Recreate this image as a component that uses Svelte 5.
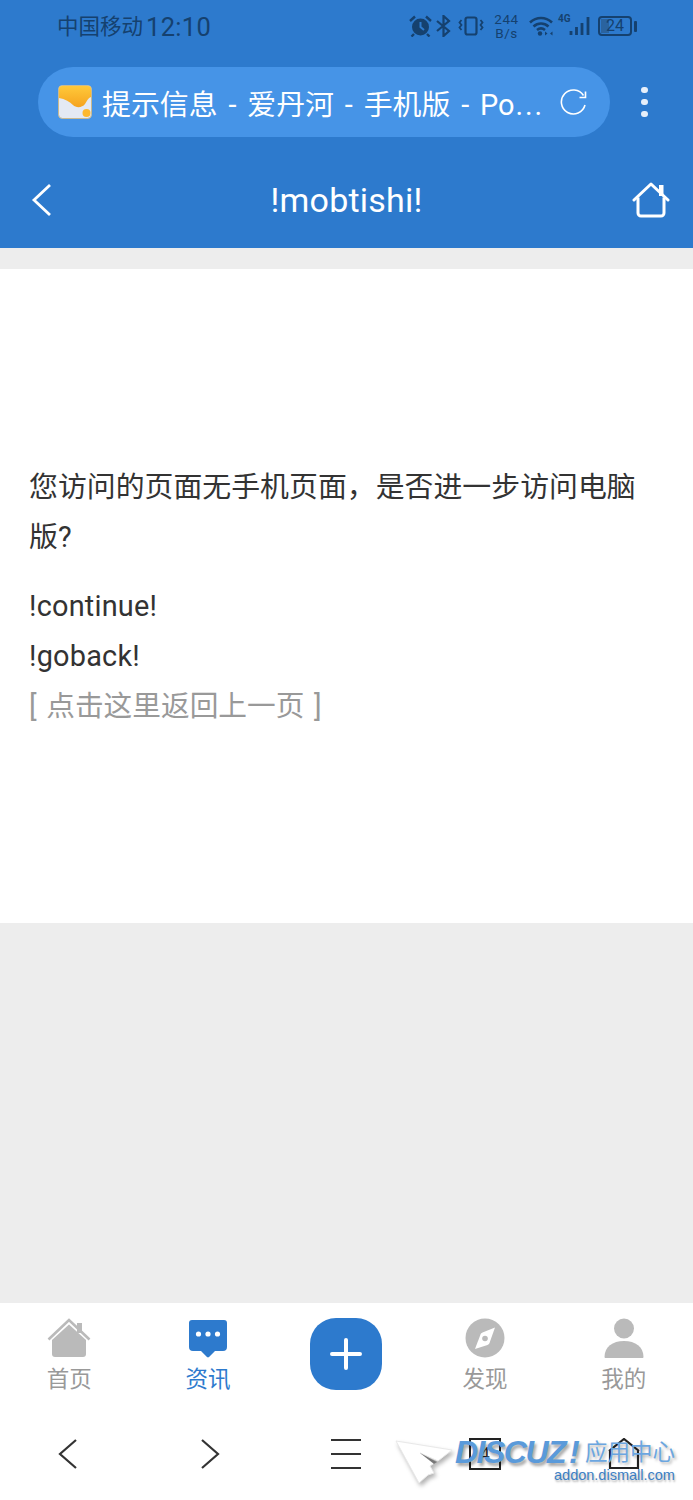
<script>
  const tabs = [
    { label: '首页', kind: 'home' },
    { label: '资讯', kind: 'chat', active: true },
    { label: '', kind: 'plus' },
    { label: '发现', kind: 'compass' },
    { label: '我的', kind: 'user' }
  ];
</script>

<div class="page">
  <header class="head">
    <div class="status">
      <div class="carrier"><span class="cn">中国移动</span><span class="time">12:10</span></div>
      <div class="sys">
        <svg width="23" height="22" viewBox="0 0 23 22" class="alarm"><circle cx="11.500" cy="12" r="8.500" fill="#15416f"/><path d="M11.500 7v5l3.500 3" stroke="#2d7acd" stroke-width="2" fill="none"/><path d="M1 6l5-4.500M22 6l-5-4.500M5 19l-2.500 2.500M18 19l2.500 2.500" stroke="#15416f" stroke-width="2.400"/></svg>
        <svg width="15" height="22" viewBox="0 0 15 22" class="bt"><path d="M1 6l12 10-5.500 5V1L13 6 1 16" stroke="#15416f" stroke-width="2.200" fill="none"/></svg>
        <svg width="26" height="20" viewBox="0 0 26 20" class="vib"><rect x="7.500" y="1.500" width="11" height="17" rx="2" stroke="#15416f" stroke-width="2.200" fill="none"/><path d="M3.500 4l-2 2.500 2 2.500-2 2.500 2 2.500M22.500 4l2 2.500-2 2.500 2 2.500-2 2.500" stroke="#15416f" stroke-width="1.800" fill="none"/></svg>
        <div class="speed"><span>244</span><span>B/s</span></div>
        <svg width="24" height="20" viewBox="0 0 24 20" class="wifi"><path d="M1 6.500c6.500-6 15.500-6 22 0M4.500 10.500c4.500-4 10.500-4 15 0M8 14c2.500-2 5.500-2 8 0" stroke="#15416f" stroke-width="2.600" fill="none"/><circle cx="11" cy="17.500" r="2.200" fill="#15416f"/><path d="M16 15.500l2.500 2-2.500 2zM23.500 15.500l-2.500 2 2.500 2z" fill="#15416f"/></svg>
        <div class="signal">
          <span class="g4">4G</span>
          <svg width="22" height="20" viewBox="0 0 22 20"><path d="M2 15v4M7.500 11v8M13 7v12M19 1v18" stroke="#15416f" stroke-width="2.800"/></svg>
        </div>
        <div class="batt"><i class="fill"></i><b>24</b></div><i class="cap"></i>
      </div>
    </div>

    <div class="urlrow">
      <div class="pill">
        <svg class="fav" width="34" height="34" viewBox="0 0 34 34">
          <defs><linearGradient id="favg" x1="0" y1="0" x2="0" y2="1"><stop offset="0" stop-color="#ffc93a"/><stop offset="1" stop-color="#f5a31f"/></linearGradient></defs>
          <rect x=".5" y=".5" width="33" height="33" rx="4" fill="#e4e9f3" stroke="#c9b98f"/>
          <path d="M1 4a3 3 0 0 1 3-3h26a3 3 0 0 1 3 3v8c-3 1-4 4-6 7-3 4-9 4-12 1-3-3-8-6-14-7z" fill="url(#favg)"/>
          <circle cx="28.500" cy="28" r="4" fill="#fcb82e"/>
        </svg>
        <span class="title">提示信息 - 爱丹河 - 手机版 - Po<span class="ell">...</span></span>
        <svg class="reload" width="28" height="28" viewBox="0 0 28 28"><path d="M23.500 8.500A12 12 0 1 0 25 18" stroke="#fff" stroke-width="1.600" fill="none"/><path d="M25.500 4.500v6h-6" stroke="#fff" stroke-width="1.600" fill="none"/></svg>
      </div>
      <div class="dots"><i></i><i></i><i></i></div>
    </div>

    <div class="nav">
      <svg width="24" height="36" viewBox="0 0 24 36"><path d="M20 3L4 18l16 15" stroke="#fff" stroke-width="2.800" fill="none"/></svg>
      <span class="navtitle">!mobtishi!</span>
      <svg class="navhome" width="38" height="36" viewBox="0 0 38 36">
        <path d="M2 18L19 2l17 16" stroke="#fff" stroke-width="3" fill="none" stroke-linejoin="round" stroke-linecap="round"/>
        <path d="M27 3h4.500v11H27z" fill="#fff"/>
        <path d="M6 15.500V31a3 3 0 0 0 3 3h20a3 3 0 0 0 3-3V15.500" stroke="#fff" stroke-width="3" fill="none"/>
      </svg>
    </div>
  </header>

  <main class="content">
    <div class="card">
      <p class="msg">您访问的页面无手机页面，是否进一步访问电脑版?</p>
      <p class="link first">!continue!</p>
      <p class="link">!goback!</p>
      <p class="link back">[ 点击这里返回上一页 ]</p>
    </div>
  </main>

  <nav class="tabs">
    {#each tabs as t}
      <div class="tab" class:active={t.active}>
        {#if t.kind === 'home'}
          <svg width="44" height="40" viewBox="0 0 44 40"><path d="M1.500 21.500L22 2l20.500 19.500" stroke="#bababa" stroke-width="2.600" fill="none"/><path d="M30 5h5v10h-5z" fill="#bababa"/><path d="M5 22L22 6.500 39 22v14a3 3 0 0 1-3 3H8a3 3 0 0 1-3-3z" fill="#bababa"/></svg>
        {:else if t.kind === 'chat'}
          <svg width="40" height="40" viewBox="0 0 40 40"><path d="M4 2h32a3 3 0 0 1 3 3v24a4 4 0 0 1-4 4h-8l-6 6a1.500 1.500 0 0 1-2 0l-6-6H5a4 4 0 0 1-4-4V5a3 3 0 0 1 3-3z" fill="#2d7acd"/><circle cx="10.500" cy="16" r="2.600" fill="#fff"/><circle cx="20" cy="16" r="2.600" fill="#fff"/><circle cx="29.500" cy="16" r="2.600" fill="#fff"/></svg>
        {:else if t.kind === 'plus'}
          <div class="plus"><svg width="34" height="34" viewBox="0 0 34 34"><path d="M17 3v28M3 17h28" stroke="#fff" stroke-width="4" stroke-linecap="round"/></svg></div>
        {:else if t.kind === 'compass'}
          <svg width="40" height="40" viewBox="0 0 40 40"><circle cx="20" cy="20" r="19.500" fill="#bababa"/><path d="M30 9.500L24.500 25c-.5 1-1 1.500-2 2L10 31l5.500-14.500c.4-1 1-1.500 2-2z" fill="#fff"/><circle cx="20" cy="20.500" r="2.800" fill="#bababa"/></svg>
        {:else}
          <svg width="40" height="40" viewBox="0 0 40 40"><circle cx="20" cy="10.500" r="10" fill="#bababa"/><path d="M0.500 39c0-10 8-16 19.500-16s19.500 6 19.500 16c0 .5-.5 1-1 1H1.500c-.5 0-1-.5-1-1z" fill="#bababa"/></svg>
        {/if}
        {#if t.label}<span class="tablabel">{t.label}</span>{/if}
      </div>
    {/each}
  </nav>

  <footer class="browser">
    <svg class="prev" width="24" height="32" viewBox="0 0 24 32"><path d="M20 2L4 16l16 14" stroke="#333" stroke-width="2.200" fill="none" /></svg>
    <svg class="next" width="24" height="32" viewBox="0 0 24 32"><path d="M4 2l16 14L4 30" stroke="#333" stroke-width="2.200" fill="none" /></svg>
    <svg width="32" height="32" viewBox="0 0 32 32"><path d="M1 2h30M1 16h30M1 30h30" stroke="#333" stroke-width="2.200"/></svg>
    <div class="count">4</div>
    <svg width="32" height="32" viewBox="0 0 32 32"><path d="M1 13L16 1l15 12" stroke="#222" stroke-width="2.200" fill="none"/><path d="M2 13v17h28V13" stroke="#222" stroke-width="2.200" fill="none"/></svg>
  </footer>

  <div class="mark">
    <svg class="plane" width="58" height="44" viewBox="0 0 58 44"><path d="M1 1l56 9-14 11-18-8 16 9-6 4 4 7-6 2-9 8z" fill="#fff" stroke="#e8e8e8"/><path d="M25 13l17 9-3 2z" fill="#777"/></svg>
    <span class="dz">DISCUZ<em>!</em></span>
    <span class="app">应用中心</span>
    <span class="addr">addon.dismall.com</span>
  </div>
</div>

<style>
  :global(body) { margin: 0; background: #ededed; }
  .page {
    position: relative;
    width: 693px;
    height: 1500px;
    display: flex;
    flex-direction: column;
    overflow: hidden;
    font-family: Roboto, "Noto Sans CJK SC", sans-serif;
    background: #ededed;
  }
  .head { height: 248px; background: #2d7acd; flex: none; display: flex; flex-direction: column; }
  .status {
    height: 52px;
    padding: 0 56px 0 57px;
    display: flex;
    justify-content: space-between;
    align-items: center;
    color: #15416f;
    box-sizing: border-box;
  }
  .carrier { display: flex; align-items: center; gap: 3px; }
  .cn { font-size: 21.500px; line-height: 26px; margin-top: 1px; }
  .time { font-size: 25.500px; line-height: 26px; margin-top: 2px; letter-spacing: .3px; }
  .sys { display: flex; align-items: center; }
  .alarm { margin-right: 4px; flex: none; }
  .bt { margin-right: 7px; flex: none; }
  .vib { margin-right: 10px; flex: none; }
  .speed { display: flex; flex-direction: column; align-items: center; font-size: 13.500px; line-height: 14px; width: 25px; margin-right: 10px; letter-spacing: .6px; }
  .wifi { margin-right: 5px; flex: none; }
  .signal { position: relative; width: 33px; height: 20px; margin-right: 7px; flex: none; }
  .signal svg { position: absolute; right: 0; top: 0; }
  .g4 { position: absolute; left: 0; top: -3px; font-size: 10px; line-height: 12px; font-weight: 700; }
  .batt {
    position: relative;
    border: 2px solid #15416f;
    border-radius: 4px;
    display: flex;
    align-items: center;
    justify-content: center;
    box-sizing: content-box;
    width: 30px;
    height: 16px;
  }
  .batt .fill { position: absolute; left: 1px; top: 1px; bottom: 1px; width: 8px; background: #2a639f; }
  .batt b { position: relative; font-weight: 400; font-size: 16px; line-height: 16px; }
  .cap { width: 3px; height: 11px; background: #15416f; margin-left: 2px; border-radius: 1px; }

  .urlrow { display: flex; align-items: center; height: 70px; margin-top: 15px; padding-left: 38px; }
  .pill {
    width: 572px;
    height: 70px;
    border-radius: 35px;
    background: #4694e7;
    display: flex;
    align-items: center;
    box-sizing: border-box;
    padding-left: 20px;
    flex: none;
  }
  .fav { flex: none; }
  .title { color: #fff; font-size: 28.900px; word-spacing: 3.700px; margin-left: 10px; white-space: nowrap; width: 441px; overflow: hidden; }
  .ell { letter-spacing: 1.800px; margin-left: 1px; }
  .reload { margin-left: 17px; flex: none; margin-top: -2px; }
  .dots { margin-left: 31px; display: flex; flex-direction: column; gap: 5.500px; }
  .dots i { display: block; width: 6.500px; height: 6.500px; border-radius: 50%; background: #e6effa; }

  .nav { flex: 1; display: flex; align-items: center; justify-content: space-between; padding: 0 23px 0 30px; color: #fff; margin-top: 15px; }
  .navtitle { font-size: 34px; position: absolute; left: 0; width: 693px; text-align: center; letter-spacing: .2px; }
  .navhome { flex: none; }

  .content { flex: 1; padding-top: 21px; }
  .card { height: 654px; background: #fff; box-sizing: border-box; padding: 192px 29px 0; color: #333; }
  .msg { margin: 0; font-size: 28.900px; line-height: 50px; position: relative; top: 1px; }
  .link { margin: 0; font-size: 28.900px; line-height: 50px; letter-spacing: .2px; }
  .first { margin-top: 20px; }
  .back { color: #999; word-spacing: 2.500px; letter-spacing: 0; font-size: 28.700px; }

  .tabs { height: 110px; flex: none; background: #fff; display: grid; grid-template-columns: repeat(5, 138.600px); padding-top: 15px; box-sizing: border-box; }
  .tab { display: flex; flex-direction: column; align-items: center; color: #999; }
  .tab.active { color: #2d7acd; }
  .tablabel { font-size: 22.500px; line-height: 28px; margin-top: 7px; }
  .plus {
    width: 72px; height: 72px; border-radius: 26px; background: #2d7acd;
    display: flex; align-items: center; justify-content: center;
  }
  .browser { height: 87px; flex: none; background: #fff; display: grid; grid-template-columns: repeat(5, 138.600px); justify-items: center; align-items: start; padding-top: 25px; box-sizing: border-box; }
  .prev { transform: translateX(-1px); }
  .next { transform: translateX(2px); }
  .count {
    width: 28px; height: 28px; border: 2px solid #222; box-sizing: content-box;
    font-family: "Liberation Serif", serif; font-size: 18px; line-height: 28px; text-align: center; color: #222;
  }

  .mark { position: absolute; left: 395px; top: 1438px; width: 290px; height: 52px; pointer-events: none; }
  .plane { position: absolute; left: 0; top: 2px; filter: drop-shadow(2px 3px 2px rgba(0,0,0,.3)); }
  .dz {
    position: absolute; left: 60px; top: -2px;
    font-family: "Liberation Sans", sans-serif; font-weight: 700; font-style: italic; font-size: 32px; letter-spacing: -1.500px;
    color: #5a9ada; text-shadow: 2px 3px 3px rgba(0,0,0,.35);
    line-height: 32px;
  }
  .dz em { font-style: italic; margin-left: 4px; }
  .app {
    position: absolute; left: 190px; top: 0; font-size: 22.500px; line-height: 28px; color: #6ba6e0;
    text-shadow: 2px 2px 3px rgba(0,0,0,.3);
  }
  .addr {
    position: absolute; left: 159px; top: 27px; font-size: 14.500px; line-height: 20px; color: #3c7fc4;
    text-shadow: 1px 2px 2px rgba(0,0,0,.3);
    font-family: "Liberation Sans", sans-serif;
  }
</style>
